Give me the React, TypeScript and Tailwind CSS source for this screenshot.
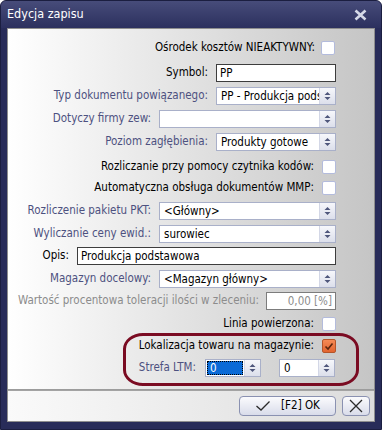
import type { ReactNode } from "react";

// spinner arrows used by combo boxes and numeric fields
function Spin() {
  return (
    <div className="flex h-full w-[16px] shrink-0 items-center justify-center border-l border-[#d3d7e6] bg-linear-to-b from-[#f6f7fb] to-[#dcdfeb]">
      <svg width="7" height="10" viewBox="0 0 7 10">
        <path d="M3.5 1 L6.5 4 H0.5 Z M0.5 6 H6.5 L3.5 9 Z" fill="#4f577c" />
      </svg>
    </div>
  );
}

function Combo({ text, className }: { text?: string; className: string }) {
  return (
    <div className={`flex h-[18px] border border-[#a9b0c9] bg-white ${className}`}>
      <span className="flex-1 overflow-hidden whitespace-nowrap px-[4px] leading-[16px] text-black">{text}</span>
      <Spin />
    </div>
  );
}

function Edit({ text, className }: { text: string; className: string }) {
  return (
    <div className={`h-[18px] border border-[#3d3d3d] bg-white px-[3px] leading-[16px] text-black ${className}`}>
      {text}
    </div>
  );
}

function Check({ checked = false }: { checked?: boolean }) {
  if (checked) {
    return (
      <div className="flex h-[14px] w-[14px] items-center justify-center rounded-[2px] border border-[#b4552a] bg-linear-to-b from-[#f58a55] to-[#e2642f]">
        <svg width="10" height="9" viewBox="0 0 10 9">
          <path d="M1.5 4.5 L4 7 L8.5 1.5" stroke="#5a260f" strokeWidth="1.6" fill="none" />
        </svg>
      </div>
    );
  }
  return <div className="h-[14px] w-[14px] rounded-[2px] border border-[#b3bbdc] bg-white" />;
}

function Row({ children, className = "" }: { children: ReactNode; className?: string }) {
  return <div className={`flex h-[20px] items-center justify-end whitespace-nowrap ${className}`}>{children}</div>;
}

const blue = "text-[#4d5180]";

export default function App() {
  return (
    <div className="h-[430px] w-[382px] overflow-hidden rounded-t-[6px] border border-[#1b1e40] bg-[#282c59] font-['DejaVu_Sans_Condensed','Liberation_Sans',sans-serif] text-[11.5px]">
      {/* title bar */}
      <div className="flex h-[27px] items-center justify-between bg-linear-to-b from-[#474c7a] to-[#2c305e] pl-[6px] pr-[14px]">
        <span className="text-[12.5px] text-white">Edycja zapisu</span>
        <svg width="13" height="12" viewBox="0 0 13 12">
          <path d="M1.5 1.5 L11.5 10.5 M11.5 1.5 L1.5 10.5" stroke="#d5d9e8" strokeWidth="2.6" />
        </svg>
      </div>

      <div className="mx-[6px] flex h-[394px] flex-col border border-[#8e8e8e]">
        {/* form */}
        <div className="relative flex h-[361px] flex-col border-b border-[#9c9c9c] bg-linear-to-r from-white to-[#c5c5c5] pr-[38px] pt-[9px]">
          <Row className="gap-[6px] pr-[1px]">
            <span className="text-black">Ośrodek kosztów NIEAKTYWNY:</span>
            <Check />
          </Row>
          <Row className="mt-[5px] gap-[8px]">
            <span className="text-black">Symbol:</span>
            <Edit text="PP" className="w-[120px]" />
          </Row>
          <Row className="mt-[3px] gap-[8px]">
            <span className={blue}>Typ dokumentu powiązanego:</span>
            <Combo text="PP - Produkcja podstawowa" className="w-[120px]" />
          </Row>
          <Row className="mt-[3px] gap-[8px]">
            <span className={blue}>Dotyczy firmy zew:</span>
            <Combo className="w-[177px]" />
          </Row>
          <Row className="mt-[3px] gap-[8px]">
            <span className={blue}>Poziom zagłębienia:</span>
            <Combo text="Produkty gotowe" className="w-[120px]" />
          </Row>
          <Row className="mt-[5px] gap-[8px]">
            <span className="text-black">Rozliczanie przy pomocy czytnika kodów:</span>
            <Check />
          </Row>
          <Row className="mt-[1px] gap-[8px]">
            <span className="text-black">Automatyczna obsługa dokumentów MMP:</span>
            <Check />
          </Row>
          <Row className="mt-[3px] gap-[8px]">
            <span className={blue}>Rozliczenie pakietu PKT:</span>
            <Combo text="<Główny>" className="w-[177px]" />
          </Row>
          <Row className="mt-[3px] gap-[8px]">
            <span className={blue}>Wyliczanie ceny ewid.:</span>
            <Combo text="surowiec" className="w-[177px]" />
          </Row>
          <Row className="mt-[2px] gap-[8px]">
            <span className="text-black">Opis:</span>
            <Edit text="Produkcja podstawowa" className="w-[259px]" />
          </Row>
          <Row className="mt-[3px] gap-[8px]">
            <span className={blue}>Magazyn docelowy:</span>
            <Combo text="<Magazyn główny>" className="w-[177px]" />
          </Row>
          <Row className="mt-[2px] gap-[7px]">
            <span className="text-[#8c8c8c]">Wartość procentowa toleracji ilości w zleceniu:</span>
            <div className="h-[18px] w-[70px] border border-[#7c7c7c] bg-white pr-[3px] text-right leading-[16px] text-[#8c8c8c]">
              0,00 [%]
            </div>
          </Row>
          <Row className="mt-[3px] gap-[8px]">
            <span className="text-black">Linia powierzona:</span>
            <Check />
          </Row>
          <Row className="mt-[2px] gap-[8px]">
            <span className="text-black">Lokalizacja towaru na magazynie:</span>
            <Check checked />
          </Row>
          <Row className="mt-[2px] gap-[9px] pr-[1px]">
            <span className={blue}>Strefa LTM:</span>
            <div className="flex items-center gap-[18px]">
              <div className="flex h-[18px] w-[56px] border border-[#a9b0c9] bg-white">
                <div className="flex-1 p-[1px]">
                  <div className="h-full border border-dotted border-black bg-[#0a6ad6] pl-[2px] leading-[13px] text-white">0</div>
                </div>
                <Spin />
              </div>
              <div className="flex h-[18px] w-[56px] border border-[#a9b0c9] bg-white">
                <span className="flex-1 pl-[4px] leading-[16px] text-black">0</span>
                <Spin />
              </div>
            </div>
          </Row>
          {/* red annotation */}
          <div className="absolute left-[115px] top-[304px] h-[53px] w-[236px] rounded-[20px/16px] border-[3px] border-[#7a0b22]" />
        </div>

        {/* footer */}
        <div className="flex flex-1 items-center justify-end gap-[6px] border-t border-[#a3a3a3] bg-linear-to-r from-[#fafafa] to-[#dcdcdc] pr-[4px]">
          <button className="flex h-[20px] w-[97px] items-center justify-center gap-[10px] rounded-[4px] border border-[#8a91b1] bg-linear-to-b from-[#fbfbfd] to-[#d9dcea] text-black">
            <svg width="16" height="12" viewBox="0 0 16 12">
              <path d="M1.5 6 L6 10 L14.5 1.5" stroke="#2a2a2a" strokeWidth="1.3" fill="none" />
            </svg>
            <span>[F2] OK</span>
          </button>
          <button className="flex h-[20px] w-[28px] items-center justify-center rounded-[4px] border border-[#8a91b1] bg-linear-to-b from-[#fbfbfd] to-[#d9dcea]">
            <svg width="14" height="14" viewBox="0 0 14 14">
              <path d="M1 1 L13 13 M13 1 L1 13" stroke="#2a2a2a" strokeWidth="1.3" />
            </svg>
          </button>
        </div>
      </div>
    </div>
  );
}
